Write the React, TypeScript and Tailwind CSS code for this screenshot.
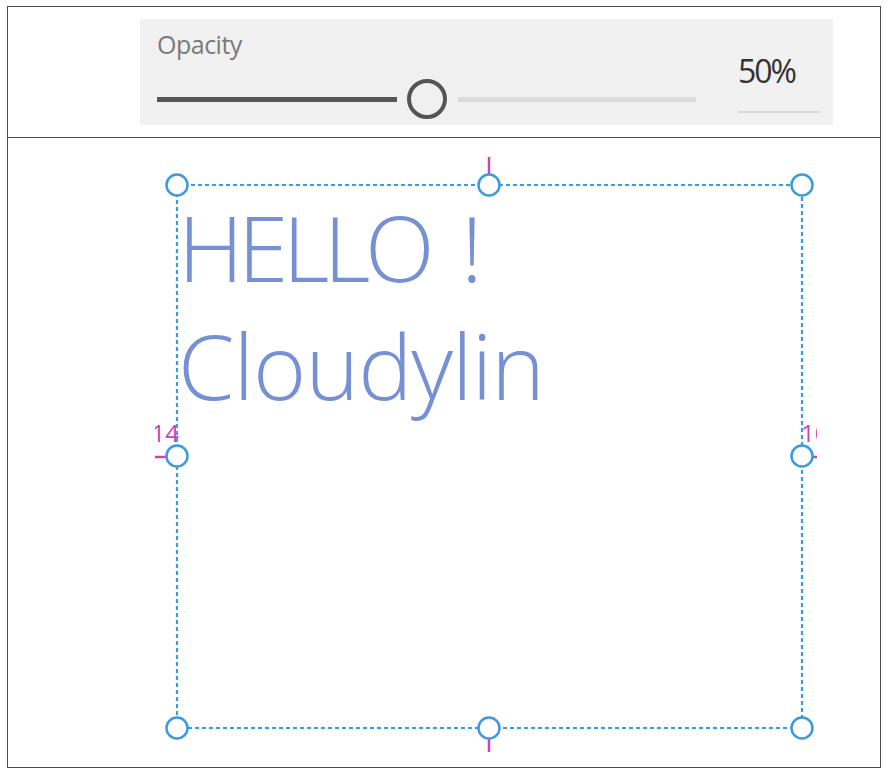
import React from "react";

const BLUE = "#3d9ae0";
const MAG = "#c845b8";

function Handle({ cx, cy }: { cx: number; cy: number }) {
  return <circle cx={cx} cy={cy} r={10.5} fill="white" stroke={BLUE} strokeWidth={2.5} />;
}

export default function App() {
  const handles: [number, number][] = [
    [177, 185],
    [489, 185],
    [802, 185],
    [177, 456],
    [802, 456],
    [177, 728],
    [489, 728],
    [802, 728],
  ];
  return (
    <div className="w-[890px] h-[776px] bg-white pt-[6px] pl-[7px] font-['Open_Sans','Noto_Sans_CJK_SC',sans-serif]">
      <div className="w-[874px] h-[762px] border border-[#4a4a4a] flex flex-col">
        <div className="h-[131px] shrink-0 border-b border-[#4a4a4a] pl-[132px] pt-[12px]">
          <div className="w-[693px] h-[106px] bg-[#f2f1f2] flex">
            <div className="w-[598px] pl-[17px] flex flex-col">
              <div className="mt-[13px] text-[25px] leading-[25px] text-[#7a7a7a] tracking-[-0.5px]">Opacity</div>
              <div className="mt-[22px] h-[40px] w-[539px] flex items-center">
                <div className="w-[240px] h-[5px] bg-[#56565b]" />
                <div className="ml-[10px] w-[40px] h-[40px] rounded-full border-[4px] border-[#555555] bg-[#f0f0f0] box-border" />
                <div className="ml-[11px] flex-1 h-[5px] bg-[#dcdcdc]" />
              </div>
            </div>
            <div className="flex flex-col">
              <div className="mt-[36px] text-[32px] leading-[32px] text-[#333333] tracking-[-2px]">50%</div>
              <div className="mt-[24px] w-[82px] h-[2px] bg-[#dadada]" />
            </div>
          </div>
        </div>
        <div className="relative flex-1">
          <div className="ml-[170px] mt-[50px] text-[91px] leading-[118px] text-[#7690d4] font-light">
            <div className="flex">
              <span className="tracking-[-5.5px]">HELLO</span>
              <span className="ml-[32px]">!</span>
            </div>
            <div className="tracking-[-1px]">Cloudylin</div>
          </div>
          <svg
            className="absolute left-[147px] top-[2px]"
            width={662}
            height={620}
            viewBox="155 140 662 620"
          >
            <rect
              x={177}
              y={185}
              width={625}
              height={543}
              fill="none"
              stroke={BLUE}
              strokeWidth={2.2}
              strokeDasharray="4 3"
            />
            <line x1={489} y1={157} x2={489} y2={174} stroke={MAG} strokeWidth={2.5} />
            <line x1={489} y1={739} x2={489} y2={752} stroke={MAG} strokeWidth={2.5} />
            <line x1={155} y1={457} x2={166} y2={457} stroke={MAG} strokeWidth={2.5} />
            <line x1={812} y1={457} x2={818} y2={457} stroke={MAG} strokeWidth={2.5} />
            <text x={179} y={442} fill={MAG} fontSize={24} textAnchor="end" fontFamily="Open Sans, sans-serif">14</text>
            <text x={801} y={442} fill={MAG} fontSize={24} fontFamily="Open Sans, sans-serif">10</text>
            {handles.map(([x, y]) => (
              <Handle key={`${x}-${y}`} cx={x} cy={y} />
            ))}
          </svg>
        </div>
      </div>
    </div>
  );
}
